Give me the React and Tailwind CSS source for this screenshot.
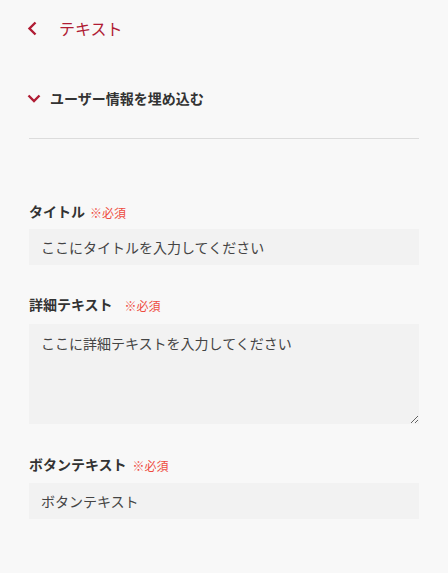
import { useState } from "react";

function Required() {
  return <span className="text-[12px] text-[#ee4b40]">※必須</span>;
}

function Label({ children, gap = "ml-[6px]" }) {
  return (
    <div className="flex h-5 items-center">
      <span className="text-[14px] font-bold text-[#333]">{children}</span>
      <span className={gap}>
        <Required />
      </span>
    </div>
  );
}

export default function App() {
  const [title, setTitle] = useState("ここにタイトルを入力してください");
  const [detail, setDetail] = useState("ここに詳細テキストを入力してください");
  const [button, setButton] = useState("ボタンテキスト");

  return (
    <div
      className="min-h-[573px] w-full bg-[#f8f8f8] text-[#333]"
      style={{ fontFamily: '"Noto Sans CJK JP", "Noto Sans", sans-serif' }}
    >
      {/* header */}
      <div className="flex h-14 items-center px-[27px]">
        <svg width="11" height="15" viewBox="0 0 11 15" fill="none" className="shrink-0">
          <path d="M8.5 1.5L2.5 7.5L8.5 13.5" stroke="#b01c34" strokeWidth="2.4" />
        </svg>
        <span className="ml-[21px] text-[16px] text-[#b01c34]">テキスト</span>
      </div>

      {/* accordion */}
      <div className="mt-[22px] flex h-10 items-center px-[27px]">
        <svg width="14" height="9" viewBox="0 0 14 9" fill="none" className="shrink-0">
          <path d="M1.5 1.5L7 7L12.5 1.5" stroke="#b01c34" strokeWidth="2.4" />
        </svg>
        <span className="ml-[9px] text-[14px] font-bold text-[#333]">ユーザー情報を埋め込む</span>
      </div>
      <div className="mx-[29px] mt-5 border-t border-[#dcdcdc]" />

      {/* form */}
      <div className="mt-[62px] flex flex-col px-[29px]">
        <Label gap="ml-[5px]">タイトル</Label>
        <input
          className="mt-2 h-9 w-full bg-[#f2f2f2] px-3 text-[14px] text-[#444] outline-none"
          value={title}
          onChange={(e) => setTitle(e.target.value)}
        />

        <div className="mt-[29px]">
          <Label gap="ml-[12px]">詳細テキスト</Label>
        </div>
        <textarea
          className="mt-[10px] h-[100px] w-full bg-[#f2f2f2] px-3 py-[9px] text-[14px] leading-5 text-[#444] outline-none"
          value={detail}
          onChange={(e) => setDetail(e.target.value)}
        />

        <div className="mt-[30px]">
          <Label>ボタンテキスト</Label>
        </div>
        <input
          className="mt-[9px] h-9 w-full bg-[#f2f2f2] px-3 text-[14px] text-[#444] outline-none"
          value={button}
          onChange={(e) => setButton(e.target.value)}
        />
      </div>
    </div>
  );
}
